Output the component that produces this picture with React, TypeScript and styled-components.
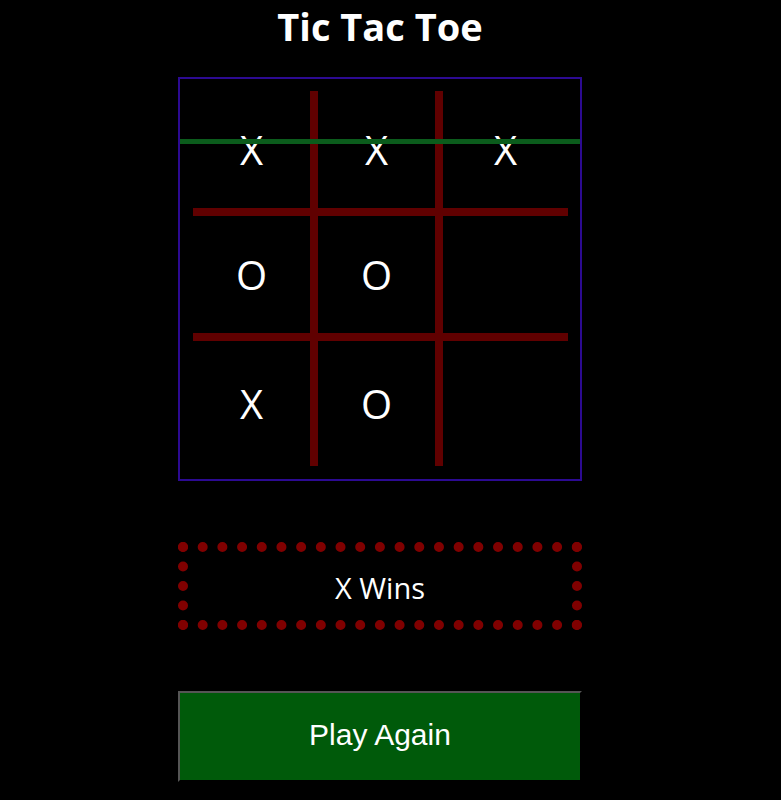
import React, { useState } from "react";
import styled, { createGlobalStyle } from "styled-components";

const GlobalStyle = createGlobalStyle`
  html, body {
    margin: 0;
    padding: 0;
    background: #000;
  }
  body {
    font-family: "Open Sans", "Noto Sans", sans-serif;
    color: #fff;
  }
`;

const Page = styled.div`
  width: 760px;
  display: flex;
  flex-direction: column;
  align-items: center;
`;

const Title = styled.h1`
  margin: 0;
  height: 52px;
  font-size: 38px;
  line-height: 52px;
  font-weight: 700;
  color: #fff;
`;

const Board = styled.div`
  position: relative;
  margin-top: 25px;
  width: 400px;
  height: 400px;
  box-sizing: content-box;
  border: 2px solid #2c0a92;
`;

const Grid = styled.div`
  display: grid;
  grid-template-columns: repeat(3, 125px);
  grid-template-rows: repeat(3, 125px);
  padding: 12px 12px 13px 13px;
`;

const Cell = styled.div<{ $right: boolean; $bottom: boolean }>`
  display: flex;
  align-items: center;
  justify-content: center;
  box-sizing: border-box;
  border-right: ${(p) => (p.$right ? "8px solid #600000" : "none")};
  border-bottom: ${(p) => (p.$bottom ? "8px solid #600000" : "none")};
  font-size: 40px;
  color: #fff;
  cursor: pointer;
`;

const WinLine = styled.div`
  position: absolute;
  left: 0;
  right: 0;
  top: 60px;
  height: 5px;
  background: #0b5c1c;
`;

const Status = styled.div`
  margin-top: 61px;
  width: 384px;
  height: 66px;
  border: 10px dotted #800000;
  display: flex;
  align-items: center;
  justify-content: center;
  padding-top: 2px;
  box-sizing: content-box;
  font-size: 29px;
`;

const PlayButton = styled.button`
  margin-top: 61px;
  width: 404px;
  height: 91px;
  border: 2px solid;
  border-color: #555 #000 #000 #555;
  background: #005a0a;
  color: #fff;
  font-family: "Liberation Sans", Arial, sans-serif;
  font-size: 30px;
  padding: 0 0 4px;
  cursor: pointer;
`;

const initial = ["X", "X", "X", "O", "O", "", "X", "O", ""];

const App: React.FC = () => {
  const [cells, setCells] = useState<string[]>(initial);

  return (
    <Page>
      <GlobalStyle />
      <Title>Tic Tac Toe</Title>
      <Board>
        <Grid>
          {cells.map((value, i) => (
            <Cell key={i} $right={i % 3 !== 2} $bottom={i < 6}>
              {value}
            </Cell>
          ))}
        </Grid>
        <WinLine />
      </Board>
      <Status>X Wins</Status>
      <PlayButton onClick={() => setCells(Array(9).fill(""))}>
        Play Again
      </PlayButton>
    </Page>
  );
};

export default App;
